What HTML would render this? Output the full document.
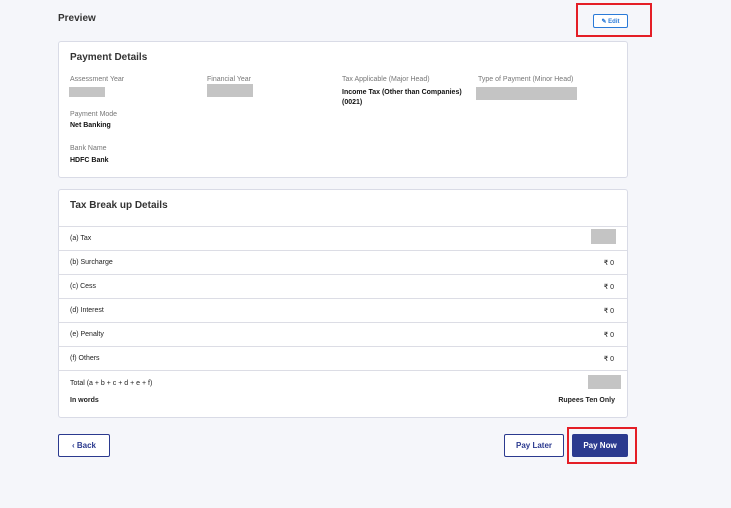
<!DOCTYPE html><html><head><style>
body{margin:0;width:731px;height:508px;background:#f5f6fa;font-family:"Liberation Sans",sans-serif;position:relative;overflow:hidden}
.a{position:absolute}
.card{position:absolute;left:58px;width:568px;background:#fff;border:1px solid #d9dbe6;border-radius:3px}
.lbl{font-size:7px;color:#777}
.val{font-size:7px;color:#111;font-weight:bold}
.g{background:#c4c4c4;position:absolute}
.line{position:absolute;left:58px;width:569px;height:1px;background:#dcdde5}
.row{position:absolute;left:70px;font-size:7px;color:#222}
.rv{position:absolute;right:117px;font-size:7px;color:#222}
.btn{position:absolute;border:1px solid #2b3a8f;border-radius:2px;font-size:8px;font-weight:bold;color:#2b3a8f;display:flex;align-items:center;justify-content:center;box-sizing:border-box;background:#fff}
.red{position:absolute;border:2px solid #e41e26;box-sizing:border-box}
</style></head><body>
<div class="a" style="left:58px;top:13px;font-size:10px;font-weight:bold;color:#333">Preview</div>
<div class="btn" style="left:593px;top:14px;width:35px;height:14px;border-color:#2a7ad8;color:#2a7ad8;font-size:6px">✎ Edit</div>
<div class="red" style="left:576px;top:3px;width:76px;height:34px"></div>
<div class="card" style="top:41px;height:135px"></div>
<div class="a" style="left:70px;top:52px;font-size:10px;font-weight:bold;color:#333">Payment Details</div>
<div class="a lbl" style="left:70px;top:76px">Assessment Year</div>
<div class="g" style="left:69px;top:87px;width:36px;height:10px"></div>
<div class="a lbl" style="left:207px;top:76px">Financial Year</div>
<div class="g" style="left:207px;top:84px;width:46px;height:13px"></div>
<div class="a lbl" style="left:342px;top:76px">Tax Applicable (Major Head)</div>
<div class="a val" style="left:342px;top:88px;line-height:10px">Income Tax (Other than Companies)<br>(0021)</div>
<div class="a lbl" style="left:478px;top:76px">Type of Payment (Minor Head)</div>
<div class="g" style="left:476px;top:87px;width:101px;height:13px"></div>
<div class="a lbl" style="left:70px;top:111px">Payment Mode</div>
<div class="a val" style="left:70px;top:122px">Net Banking</div>
<div class="a lbl" style="left:70px;top:145px">Bank Name</div>
<div class="a val" style="left:70px;top:157px">HDFC Bank</div>
<div class="card" style="top:189px;height:227px"></div>
<div class="a" style="left:70px;top:200px;font-size:10px;font-weight:bold;color:#333">Tax Break up Details</div>
<div class="line" style="top:226px"></div><div class="line" style="top:250px"></div><div class="line" style="top:274px"></div><div class="line" style="top:298px"></div><div class="line" style="top:322px"></div><div class="line" style="top:346px"></div><div class="line" style="top:370px"></div>
<div class="row" style="top:235px">(a) Tax</div><div class="g" style="left:591px;top:229px;width:25px;height:15px"></div>
<div class="row" style="top:259px">(b) Surcharge</div><div class="rv" style="top:259px">₹ 0</div>
<div class="row" style="top:283px">(c) Cess</div><div class="rv" style="top:283px">₹ 0</div>
<div class="row" style="top:307px">(d) Interest</div><div class="rv" style="top:307px">₹ 0</div>
<div class="row" style="top:331px">(e) Penalty</div><div class="rv" style="top:331px">₹ 0</div>
<div class="row" style="top:355px">(f) Others</div><div class="rv" style="top:355px">₹ 0</div>
<div class="row" style="top:380px">Total (a + b + c + d + e + f)</div><div class="g" style="left:588px;top:375px;width:33px;height:14px"></div>
<div class="row" style="top:397px;font-weight:bold">In words</div><div class="rv" style="top:397px;right:116px;font-weight:bold">Rupees Ten Only</div>
<div class="btn" style="left:58px;top:434px;width:52px;height:23px">‹ Back</div>
<div class="btn" style="left:504px;top:434px;width:60px;height:23px">Pay Later</div>
<div class="btn" style="left:572px;top:434px;width:56px;height:23px;background:#2b3a8f;color:#fff">Pay Now</div>
<div class="red" style="left:567px;top:427px;width:70px;height:37px"></div>
</body></html>
